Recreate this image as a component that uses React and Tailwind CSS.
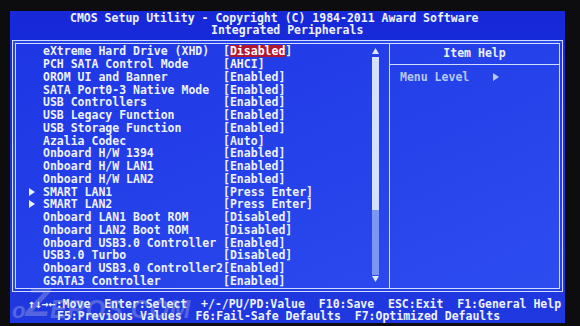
import React from 'react';

const items = [
    { label: 'eXtreme Hard Drive (XHD)', value: 'Disabled', selected: true },
    { label: 'PCH SATA Control Mode', value: 'AHCI' },
    { label: 'OROM UI and Banner', value: 'Enabled' },
    { label: 'SATA Port0-3 Native Mode', value: 'Enabled' },
    { label: 'USB Controllers', value: 'Enabled' },
    { label: 'USB Legacy Function', value: 'Enabled' },
    { label: 'USB Storage Function', value: 'Enabled' },
    { label: 'Azalia Codec', value: 'Auto' },
    { label: 'Onboard H/W 1394', value: 'Enabled' },
    { label: 'Onboard H/W LAN1', value: 'Enabled' },
    { label: 'Onboard H/W LAN2', value: 'Enabled' },
    { label: 'SMART LAN1', value: 'Press Enter', sub: true },
    { label: 'SMART LAN2', value: 'Press Enter', sub: true },
    { label: 'Onboard LAN1 Boot ROM', value: 'Disabled' },
    { label: 'Onboard LAN2 Boot ROM', value: 'Disabled' },
    { label: 'Onboard USB3.0 Controller', value: 'Enabled' },
    { label: 'USB3.0 Turbo', value: 'Disabled' },
    { label: 'Onboard USB3.0 Controller2', value: 'Enabled' },
    { label: 'GSATA3 Controller', value: 'Enabled' },
];

const font = { fontFamily: '"DejaVu Sans Mono", "Liberation Mono", monospace' };

const SubArrow = () => (
    <svg width="6" height="8" viewBox="0 0 6 8" className="fill-[#eef2ff]">
        <path d="M0 0 L6 4 L0 8 Z" />
    </svg>
);

const App = () => {
    return (
        <div className="w-[580px] h-[326px] bg-[#0d0d0f] pt-[11px] pl-[10px] overflow-hidden" style={font}>
            <div className="relative w-[555px] h-[312px] bg-linear-to-b from-[#1628d8] to-[#2038e0] text-[#eef2ff] font-bold text-[11.5px] leading-[12px]">

                {/* Title */}
                <div className="h-[29px] pt-[1px]">
                    <div className="pl-[60px] whitespace-pre">CMOS Setup Utility - Copyright (C) 1984-2011 Award Software</div>
                    <div className="pl-[201px] whitespace-pre">Integrated Peripherals</div>
                </div>

                {/* Main frame */}
                <div className="ml-[2px] w-[551px] h-[252px] border-4 border-double border-[#d2dcff] flex bg-linear-to-br from-[#1e36e4] to-[#2d4cf0]">

                    {/* Left: item list */}
                    <div className="w-[373px] flex">
                        <div className="flex-1 pt-[1px]">
                            {items.map((it) => (
                                <div key={it.label} className="flex items-center h-[12.75px] whitespace-pre">
                                    <div className="w-[27px] pl-[13px] flex items-center">
                                        {it.sub && <SubArrow />}
                                    </div>
                                    <div className="w-[180px]">{it.label}</div>
                                    <div className="flex">
                                        <span>[</span>
                                        {it.selected
                                            ? <span className="bg-[#b3172f] text-white">{it.value}</span>
                                            : <span>{it.value}</span>}
                                        <span>]</span>
                                    </div>
                                </div>
                            ))}
                        </div>

                        {/* Scrollbar */}
                        <div className="w-[7px] mr-[10px] pt-[4px] flex flex-col items-center">
                            <svg width="7" height="6" viewBox="0 0 7 6" className="fill-[#dfe7ff]"><path d="M3.5 0 L7 6 L0 6 Z" /></svg>
                            <div className="mt-[3px] w-[7px] h-[153px] bg-[#d4e0ff]" />
                            <div className="w-[7px] h-[65px] bg-[#7b97ef]" />
                            <svg width="7" height="6" viewBox="0 0 7 6" className="mt-[1px] fill-[#dfe7ff]"><path d="M0 0 L7 0 L3.5 6 Z" /></svg>
                        </div>
                    </div>

                    {/* Right: item help */}
                    <div className="w-[170px] border-l border-[#d2dcff] flex flex-col">
                        <div className="h-[21px] border-b border-[#d2dcff] flex items-center justify-center pb-[3px]">Item Help</div>
                        <div className="pt-[6px] pl-[10px] flex items-center text-[#b9c8f4] whitespace-pre">
                            <span>Menu Level</span>
                            <svg width="6" height="8" viewBox="0 0 6 8" className="ml-[24px] fill-[#b9c8f4]"><path d="M0 0 L6 4 L0 8 Z" /></svg>
                        </div>
                    </div>
                </div>

                {/* Footer */}
                <div className="pt-[6px]">
                    <div className="pl-[18px] whitespace-pre">↑↓→←:Move  Enter:Select  +/-/PU/PD:Value  F10:Save  ESC:Exit  F1:General Help</div>
                    <div className="pl-[47px] whitespace-pre">F5:Previous Values  F6:Fail-Safe Defaults  F7:Optimized Defaults</div>
                </div>

                {/* Watermark */}
                <div className="absolute left-[2px] top-[271px] flex items-end text-[#c8cede] opacity-30 italic font-bold pointer-events-none" style={{ fontFamily: '"Liberation Sans", sans-serif' }}>
                    <span className="text-[22px] leading-none">o</span>
                    <span className="text-[40px] leading-none">Z</span>
                    <span className="text-[25px] leading-none tracking-wide">EROS.COM</span>
                </div>
            </div>
        </div>
    );
};

export default App;
